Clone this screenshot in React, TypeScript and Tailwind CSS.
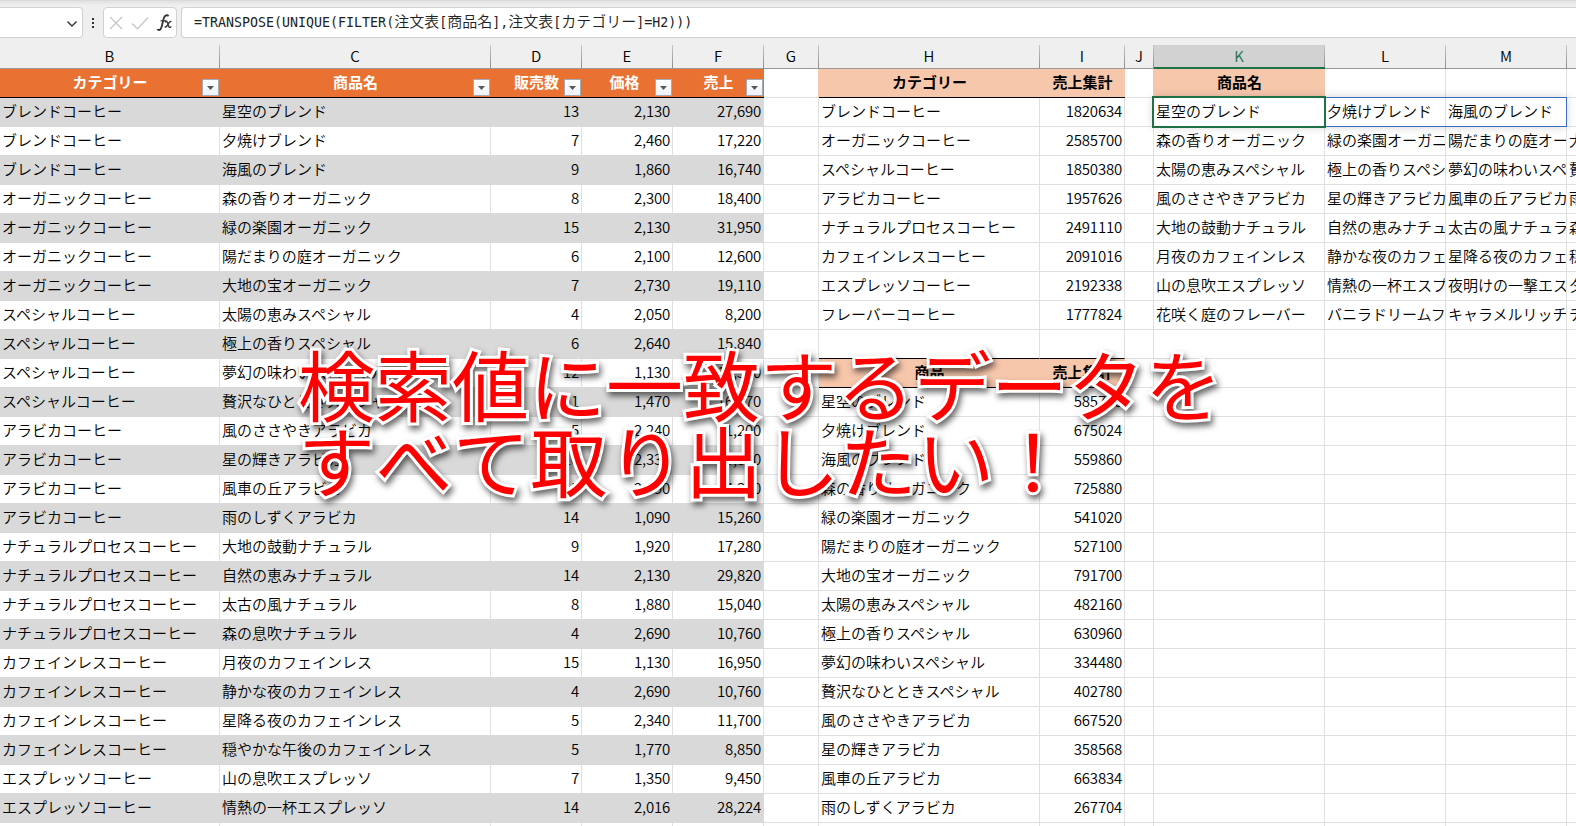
const table: [string, string, string, string, string][] = [
  ['ブレンドコーヒー', '星空のブレンド', '13', '2,130', '27,690'],
  ['ブレンドコーヒー', '夕焼けブレンド', '7', '2,460', '17,220'],
  ['ブレンドコーヒー', '海風のブレンド', '9', '1,860', '16,740'],
  ['オーガニックコーヒー', '森の香りオーガニック', '8', '2,300', '18,400'],
  ['オーガニックコーヒー', '緑の楽園オーガニック', '15', '2,130', '31,950'],
  ['オーガニックコーヒー', '陽だまりの庭オーガニック', '6', '2,100', '12,600'],
  ['オーガニックコーヒー', '大地の宝オーガニック', '7', '2,730', '19,110'],
  ['スペシャルコーヒー', '太陽の恵みスペシャル', '4', '2,050', '8,200'],
  ['スペシャルコーヒー', '極上の香りスペシャル', '6', '2,640', '15,840'],
  ['スペシャルコーヒー', '夢幻の味わいスペシャル', '12', '1,130', '13,560'],
  ['スペシャルコーヒー', '贅沢なひとときスペシャル', '11', '1,470', '16,170'],
  ['アラビカコーヒー', '風のささやきアラビカ', '5', '2,240', '11,200'],
  ['アラビカコーヒー', '星の輝きアラビカ', '10', '2,330', '23,300'],
  ['アラビカコーヒー', '風車の丘アラビカ', '15', '2,290', '34,350'],
  ['アラビカコーヒー', '雨のしずくアラビカ', '14', '1,090', '15,260'],
  ['ナチュラルプロセスコーヒー', '大地の鼓動ナチュラル', '9', '1,920', '17,280'],
  ['ナチュラルプロセスコーヒー', '自然の恵みナチュラル', '14', '2,130', '29,820'],
  ['ナチュラルプロセスコーヒー', '太古の風ナチュラル', '8', '1,880', '15,040'],
  ['ナチュラルプロセスコーヒー', '森の息吹ナチュラル', '4', '2,690', '10,760'],
  ['カフェインレスコーヒー', '月夜のカフェインレス', '15', '1,130', '16,950'],
  ['カフェインレスコーヒー', '静かな夜のカフェインレス', '4', '2,690', '10,760'],
  ['カフェインレスコーヒー', '星降る夜のカフェインレス', '5', '2,340', '11,700'],
  ['カフェインレスコーヒー', '穏やかな午後のカフェインレス', '5', '1,770', '8,850'],
  ['エスプレッソコーヒー', '山の息吹エスプレッソ', '7', '1,350', '9,450'],
  ['エスプレッソコーヒー', '情熱の一杯エスプレッソ', '14', '2,016', '28,224'],
  ['', '', '', '', ''],
];

const summary: [string, string][] = [
  ['ブレンドコーヒー', '1820634'],
  ['オーガニックコーヒー', '2585700'],
  ['スペシャルコーヒー', '1850380'],
  ['アラビカコーヒー', '1957626'],
  ['ナチュラルプロセスコーヒー', '2491110'],
  ['カフェインレスコーヒー', '2091016'],
  ['エスプレッソコーヒー', '2192338'],
  ['フレーバーコーヒー', '1777824'],
  ['', ''],
  ['商品', '売上集計'],
  ['星空のブレンド', '585720'],
  ['夕焼けブレンド', '675024'],
  ['海風のブレンド', '559860'],
  ['森の香りオーガニック', '725880'],
  ['緑の楽園オーガニック', '541020'],
  ['陽だまりの庭オーガニック', '527100'],
  ['大地の宝オーガニック', '791700'],
  ['太陽の恵みスペシャル', '482160'],
  ['極上の香りスペシャル', '630960'],
  ['夢幻の味わいスペシャル', '334480'],
  ['贅沢なひとときスペシャル', '402780'],
  ['風のささやきアラビカ', '667520'],
  ['星の輝きアラビカ', '358568'],
  ['風車の丘アラビカ', '663834'],
  ['雨のしずくアラビカ', '267704'],
  ['', ''],
];

const spill: string[][] = [
  ['星空のブレンド', '夕焼けブレンド', '海風のブレンド', ''],
  ['森の香りオーガニック', '緑の楽園オーガニック', '陽だまりの庭オーガニック', '大地の宝オーガニック'],
  ['太陽の恵みスペシャル', '極上の香りスペシャル', '夢幻の味わいスペシャル', '贅沢なひとときスペシャル'],
  ['風のささやきアラビカ', '星の輝きアラビカ', '風車の丘アラビカ', '雨のしずくアラビカ'],
  ['大地の鼓動ナチュラル', '自然の恵みナチュラル', '太古の風ナチュラル', '森の息吹ナチュラル'],
  ['月夜のカフェインレス', '静かな夜のカフェインレス', '星降る夜のカフェインレス', '穏やかな午後のカフェインレス'],
  ['山の息吹エスプレッソ', '情熱の一杯エスプレッソ', '夜明けの一撃エスプレッソ', '夕暮れエスプレッソ'],
  ['花咲く庭のフレーバー', 'バニラドリームフレーバー', 'キャラメルリッチフレーバー', 'チョコレートフレーバー'],
];

const columns = ['B', 'C', 'D', 'E', 'F', 'G', 'H', 'I', 'J', 'K', 'L', 'M', ''];
const gridCols =
  'grid w-[1687px] grid-cols-[220px_271px_91px_91px_91px_55px_221px_85px_29px_171px_121px_121px_120px]';

function Cell({ text = '', num = false, tone = '' }: { text?: string; num?: boolean; tone?: string }) {
  return (
    <div
      className={`overflow-hidden border-r border-b whitespace-nowrap leading-[26px] font-[350] ${
        num ? 'pr-0.5 text-right tracking-[-0.2px]' : 'pl-0.5'
      } ${tone || 'border-[#e0e0e0]'}`}
    >
      {text}
    </div>
  );
}

function TableHead({ text, shift = '' }: { text: string; shift?: string }) {
  return (
    <div className="flex border-b border-black bg-[#e97132] font-bold text-white">
      <div className={`flex-1 text-center leading-[26px] ${shift}`}>{text}</div>
      <FilterButton />
    </div>
  );
}

function FilterButton() {
  return (
    <div className="mt-2.5 mr-px -ml-[18px] flex h-[17px] w-[17px] items-center justify-center border border-[#a6abb3] bg-linear-to-b from-white to-[#eef1f6]">
      <svg width="7" height="4" viewBox="0 0 7 4">
        <path d="M0 0h7L3.5 4z" fill="#595959" />
      </svg>
    </div>
  );
}

function SummaryHead({ text, tone = '' }: { text: string; tone?: string }) {
  return <div className={`border-b bg-[#f7c7ac] text-center font-bold leading-[26px] ${tone}`}>{text}</div>;
}

function Kana({ children }: { children: string }) {
  return <span className="font-['Noto_Sans_CJK_JP',sans-serif] text-[15px] leading-none font-[350]">{children}</span>;
}

function FormulaBar() {
  return (
    <div className="flex h-[45px] items-start border-t border-[#d9d9d9] bg-linear-to-b from-[#e2e2e2] to-[#efefef] to-10% pt-1.5">
      <div className="flex h-[31px] w-[83px] items-center justify-end rounded-r-[4px] border border-l-0 border-[#d1d1d1] bg-white pt-0.5 pr-1">
        <svg width="12" height="8" viewBox="0 0 12 8" fill="none" stroke="#333" strokeWidth="1.4">
          <path d="M1.500 1.500 6 6l4.500-4.500" />
        </svg>
      </div>
      <div className="flex h-[31px] w-5 flex-col items-center justify-center gap-0.5">
        <i className="h-0.5 w-0.5 bg-[#333]" />
        <i className="h-0.5 w-0.5 bg-[#333]" />
        <i className="h-0.5 w-0.5 bg-[#333]" />
      </div>
      <div className="flex h-[31px] w-[74px] items-center rounded-[4px] border border-[#d1d1d1] bg-white pl-1.5">
        <svg width="64" height="24" viewBox="0 0 64 24" fill="none">
          <path d="m0 6 12 12M12 6 0 18" stroke="#c3c3c3" strokeWidth="1.200" />
          <path d="m22 12.500 5.500 5.500L38 6.500" stroke="#c3c3c3" strokeWidth="1.200" />
          <path
            d="M60 5.200c-.3-1.200-2.600-1.500-3.900.6-1 1.700-1.700 5-2.300 7.900-.6 2.700-1.200 5-3 5.300-.9.100-1.600-.3-1.600-.9"
            stroke="#333"
            strokeWidth="1.800"
            transform="translate(-1.600 0)"
          />
          <path d="M50.500 9.800h6" stroke="#333" strokeWidth="1.200" />
          <path
            d="M55.600 11.200c1.500-1.500 2.300-.6 2.800 1l.9 3c.5 1.500 1.500 1.600 2.600.2M61.900 10.800c-1.200-.8-2 .4-3.300 2.600-1.200 2-2 3.100-3.300 2.200"
            stroke="#333"
            strokeWidth="1.400"
            transform="translate(-.6 0)"
          />
        </svg>
      </div>
      <div className="ml-1 h-[31px] flex-1 rounded-l-[4px] border border-r-0 border-[#d1d1d1] bg-white pl-3 font-['DejaVu_Sans_Mono',monospace] text-[13.3px] leading-[29px] whitespace-nowrap text-[#222]">
        =TRANSPOSE(UNIQUE(FILTER(<Kana>注文表</Kana>[<Kana>商品名</Kana>],<Kana>注文表</Kana>[<Kana>カテゴリー</Kana>]=H2)))
      </div>
    </div>
  );
}

export default function App() {
  return (
    <div className="relative h-[826px] w-[1576px] overflow-hidden bg-[#efefef] font-['Noto_Sans_CJK_JP',sans-serif] text-[15px] text-black">
      <FormulaBar />
      <div className={`${gridCols} h-6 border-b border-[#999]`}>
        {columns.map((c, i) => (
          <div key={i} className={`flex ${c === 'K' ? '-mb-px border-b-2 border-[#1e7145]' : ''}`}>
            <div
              className={`h-[22px] flex-1 text-center leading-[22px] font-[350] ${
                c === 'K' ? 'bg-[#d2d2d2] text-[#1e7145]' : ''
              }`}
            >
              {c}
            </div>
            <div className="w-px bg-linear-to-b from-[#c8c8c8] to-[#8c8c8c]" />
          </div>
        ))}
      </div>
      <div className="relative bg-white">
        <div className={`${gridCols} h-[29px]`}>
          <TableHead text="カテゴリー" />
          <TableHead text="商品名" />
          <TableHead text="販売数" />
          <TableHead text="価格" shift="pr-1.5" />
          <TableHead text="売上" />
          <Cell tone="border-b-[#e0e0e0] border-r-[#f7c7ac]" />
          <SummaryHead text="カテゴリー" tone="border-black" />
          <SummaryHead text="売上集計" tone="border-black" />
          <Cell tone="border-b-[#e0e0e0] border-r-[#f7c7ac]" />
          <SummaryHead text="商品名" tone="border-[#f7c7ac]" />
          <Cell />
          <Cell />
          <Cell />
        </div>
        {table.map((row, r) => {
          const tone = r % 2 === 0 ? 'bg-[#d9d9d9] border-[#d9d9d9]' : 'border-b-[#d9d9d9] border-r-[#e0e0e0]';
          const [name, total] = summary[r];
          const head = r === 9;
          const side = r === 8 ? 'border-r-[#e0e0e0] border-b-black' : '';
          return (
            <div key={r} className={`${gridCols} h-[29px]`}>
              {row.map((t, i) => (
                <Cell key={i} text={t} num={i > 1} tone={r === 25 ? 'border-[#e0e0e0]' : tone} />
              ))}
              <Cell />
              {head ? <SummaryHead text={name} tone="border-black" /> : <Cell text={name} tone={side} />}
              {head ? <SummaryHead text={total} tone="border-black" /> : <Cell text={total} num tone={side} />}
              <Cell />
              {[0, 1, 2, 3].map((i) => (
                <Cell key={i} text={spill[r]?.[i]} />
              ))}
            </div>
          );
        })}
        <div className="absolute top-7 left-[1153px] h-[30px] w-[414px] border border-[#3a6bc0] shadow-[0_0_10px_rgba(0,0,0,0.18)]" />
        <div className="absolute top-[27px] left-[1152px] h-[32px] w-[174px] border-2 border-[#1e7145]" />
      </div>
      <div className="absolute top-[345px] left-[298px] font-['Noto_Sans_CJK_JP',sans-serif] text-[77px] leading-[76px] font-normal whitespace-nowrap text-[#ff0000] drop-shadow-[2px_4px_3px_rgba(0,0,0,0.6)] [paint-order:stroke_fill] [font-kerning:none] [-webkit-text-stroke:6px_white]">
        <div>検索値に一致するデータを</div>
        <div className="tracking-[0.4px]">すべて取り出したい！</div>
      </div>
    </div>
  );
}
